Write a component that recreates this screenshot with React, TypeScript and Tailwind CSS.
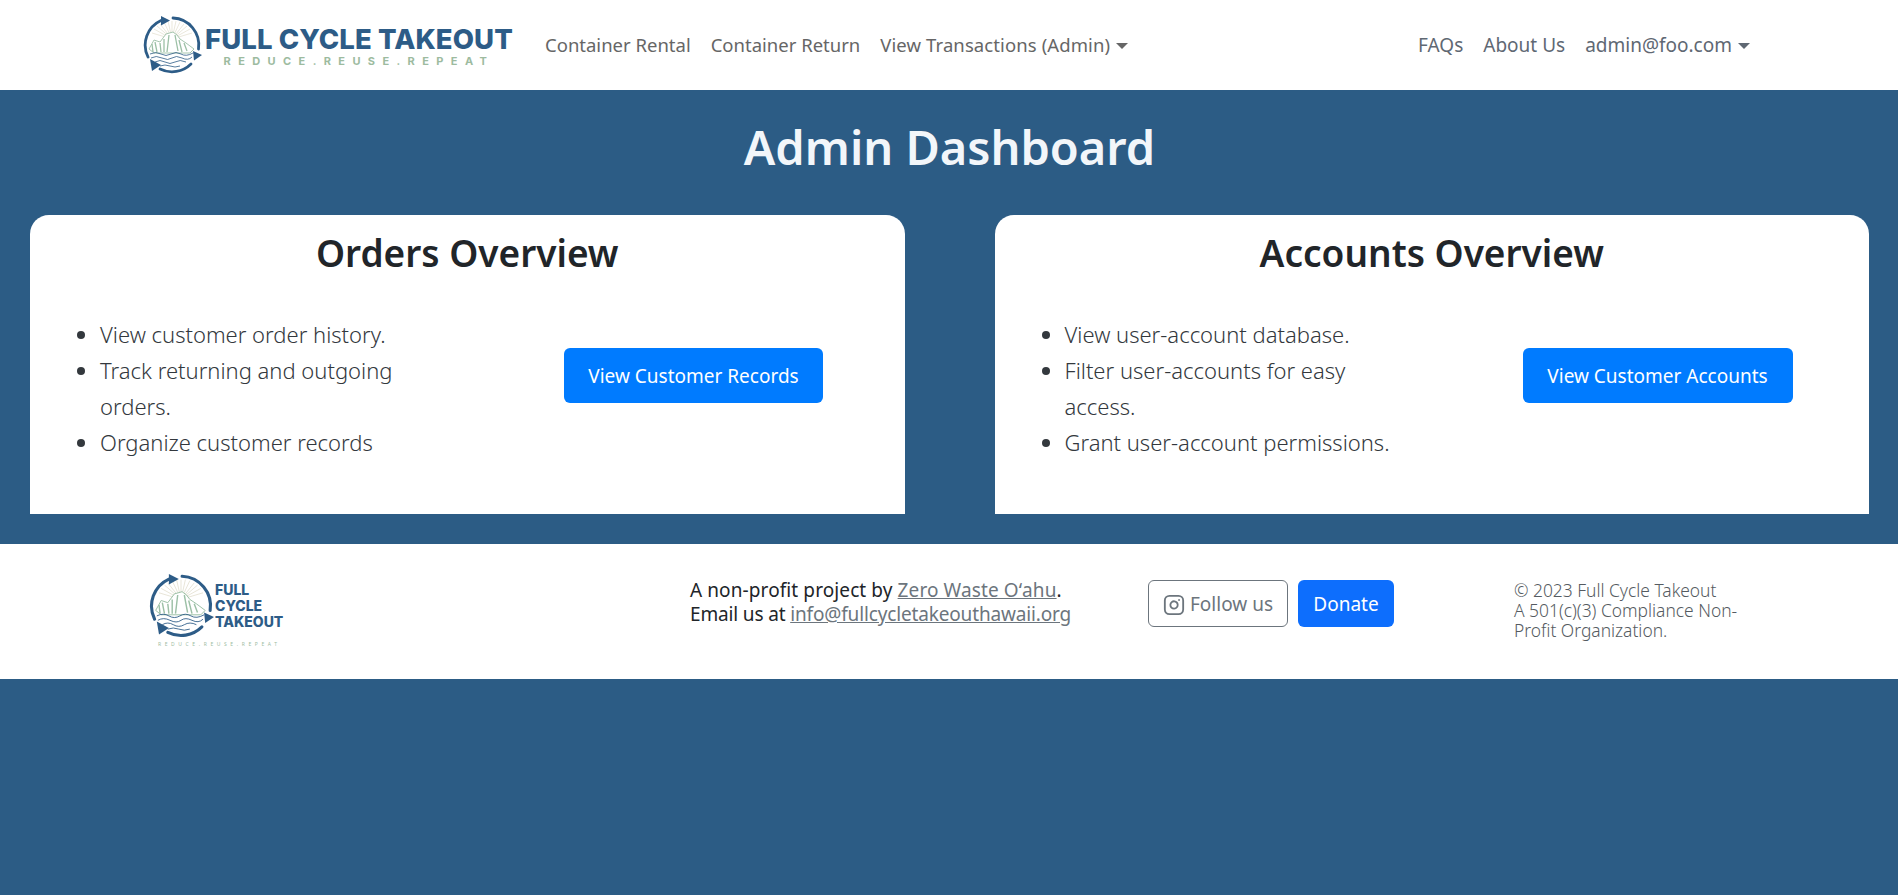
import { Instagram } from 'lucide-react'

const font = { fontFamily: '"Noto Sans", sans-serif' }

function LogoMark({ size }: { size: number }) {
  return (
    <svg width={size} height={size} viewBox="0 0 60 60" fill="none" className="shrink-0">
      {/* sun rays */}
      <g stroke="#dcd8c4" strokeWidth="0.6">
        <path d="M30 24 L30 6 M30 24 L26 6 M30 24 L34 6 M30 24 L22 7 M30 24 L38 7 M30 24 L18 9 M30 24 L42 9 M30 24 L15 11 M30 24 L45 11 M30 24 L12 14 M30 24 L48 14 M30 24 L10 18 M30 24 L50 18" />
      </g>
      {/* mountains */}
      <path d="M7 34 L12 25 L18 27 L24 19 L31 17 L35 20 L38 24 L44 28 L52 34 L48 38 L12 38 Z" fill="#fff" stroke="#9cc0a6" strokeWidth="0.9" />
      <path d="M10 29 L11 37 M13 27 L15 37 M18 28 L19 37 M22 24 L22 37 M27 20 L25 37 M33 20 L36 36 M37 25 L40 37 M42 28 L45 36" stroke="#9cc0a6" strokeWidth="1.3" />
      {/* waves */}
      <g stroke="#2d5c87" strokeWidth="0.8">
        <path d="M8 39 Q14 36 19 39 T29 39 T39 39 T51 38" />
        <path d="M9 43 Q14 40 20 43 T30 43 T40 43 T50 42" />
        <path d="M13 47 Q18 44 23 47 T33 47 T44 47" />
        <path d="M18 51 Q23 49 28 51 T38 51" />
      </g>
      {/* recycling ring */}
      <g stroke="#2d5c87" strokeWidth="2.8" strokeLinecap="round">
        <path d="M6 42 A27 27 0 0 1 19 5.5" />
        <path d="M31 3 A27 27 0 0 1 56.5 34" />
        <path d="M49 49 A27 27 0 0 1 18 54" />
      </g>
      <path d="M19 1 L28 5.5 L19 10.5 Z" fill="#2d5c87" />
      <path d="M51 36 L60 40 L52 45.5 Z" fill="#2d5c87" />
      <path d="M8 44 L19 50 L10 56 Z" fill="#2d5c87" />
    </svg>
  )
}

function Caret() {
  return <span className="ml-[6px] inline-block h-0 w-0 border-x-[6.5px] border-t-[6.5px] border-x-transparent border-t-current align-[3px]" />
}

function Card({ title, items, cta, listW, btnW, btnGap }: { title: string; items: string[]; cta: string; listW: string; btnW: string; btnGap: string }) {
  return (
    <section className="h-[299px] flex-1 rounded-t-[19px] bg-white text-[#212529]">
      <h2 className="pt-[15px] text-center text-[37px] leading-[46px] font-semibold">{title}</h2>
      <div className="flex pt-[40px]">
        <ul className={`${listW} list-disc pl-[70px] text-[22px] leading-[36px] font-light text-[#33383d]`}>
          {items.map((it) => (
            <li key={it}>{it}</li>
          ))}
        </ul>
        <a className={`${btnGap} ${btnW} mt-[32px] flex h-[55px] items-center justify-center rounded-[6px] bg-[#007bff] pt-[2px] text-[19px] text-white`}>{cta}</a>
      </div>
    </section>
  )
}

export default function App() {
  return (
    <div style={font} className="min-h-[895px] bg-[#2c5c85]">
      <header className="flex h-[90px] items-center bg-white pr-[148px] pl-[142px] text-[18.5px] text-[#666]">
        <div className="flex w-[403px] shrink-0 items-center gap-[3px]">
          <LogoMark size={60} />
          <div className="flex flex-col items-center" style={{ fontFamily: 'Inter, sans-serif' }}>
            <span className="text-[27.5px] leading-[32px] font-extrabold tracking-[0.1px] whitespace-nowrap text-[#2d5c87]">FULL CYCLE TAKEOUT</span>
            <span className="text-[11px] leading-[13px] font-bold tracking-[7.4px] whitespace-nowrap text-[#9dbb9f]">REDUCE.REUSE.REPEAT</span>
          </div>
        </div>
        <nav className="flex gap-[20px] whitespace-nowrap">
          <a>Container Rental</a>
          <a>Container Return</a>
          <a className="tracking-[0.1px]">View Transactions (Admin)<Caret /></a>
        </nav>
        <nav className="ml-auto flex gap-[20px] text-[19px] whitespace-nowrap text-[#5f6873]">
          <a>FAQs</a>
          <a>About Us</a>
          <a>admin@foo.com<Caret /></a>
        </nav>
      </header>

      <main className="pr-[29px] pb-[30px] pl-[30px]">
        <h1 className="pt-[27px] pb-[37px] text-center text-[47px] leading-[61px] font-semibold text-[#f2f6fa]">Admin Dashboard</h1>
        <div className="flex gap-[90px]">
          <Card
            title="Orders Overview"
            items={['View customer order history.', 'Track returning and outgoing orders.', 'Organize customer records']}
            cta="View Customer Records"
            listW="w-[435px]"
            btnW="w-[259px]"
            btnGap="ml-[99px]"
          />
          <Card
            title="Accounts Overview"
            items={['View user-account database.', 'Filter user-accounts for easy access.', 'Grant user-account permissions.']}
            cta="View Customer Accounts"
            listW="w-[400px] [&>li:last-child]:whitespace-nowrap"
            btnW="w-[270px]"
            btnGap="ml-[128px]"
          />
        </div>
      </main>

      <footer className="flex h-[135px] bg-white text-[#212529]">
        <div className="mt-[29px] ml-[148px] flex w-[542px] shrink-0 flex-col">
          <div className="flex items-center gap-[1px]">
            <LogoMark size={66} />
            <div className="text-[14px] leading-[16px] font-extrabold text-[#2d5c87]" style={{ fontFamily: 'Inter, sans-serif' }}>FULL<br />CYCLE<br />TAKEOUT</div>
          </div>
          <span className="mt-[2px] ml-[10px] text-[5px] leading-[6px] tracking-[3.6px] whitespace-nowrap text-[#9dbb9f]">REDUCE.REUSE.REPEAT</span>
        </div>
        <div className="mt-[34px] w-[458px] shrink-0 text-[19px] leading-[24px]">
          <span className="tracking-[0.1px]">A non-profit project by <a className="text-[#6c757d] underline">Zero Waste Oʻahu</a>.</span><br />
          <span className="tracking-[-0.15px]">Email us at <a className="text-[#6c757d] underline">info@fullcycletakeouthawaii.org</a></span>
        </div>
        <div className="mt-[36px] flex shrink-0 gap-[10px] self-start text-[19px]">
          <a className="flex h-[47px] w-[140px] items-center justify-center gap-[5px] rounded-[6px] border border-[#6c757d] pt-[2px] text-[#6c757d]"><Instagram size={22} />Follow us</a>
          <a className="flex h-[47px] w-[96px] items-center justify-center rounded-[6px] bg-[#0d6efd] pt-[2px] text-white">Donate</a>
        </div>
        <div className="mt-[36px] ml-[120px] w-[240px] text-[17.4px] leading-[20px] font-light text-[#555b61]">
          © 2023 Full Cycle Takeout<br />A 501(c)(3) Compliance Non-Profit Organization.
        </div>
      </footer>
    </div>
  )
}
